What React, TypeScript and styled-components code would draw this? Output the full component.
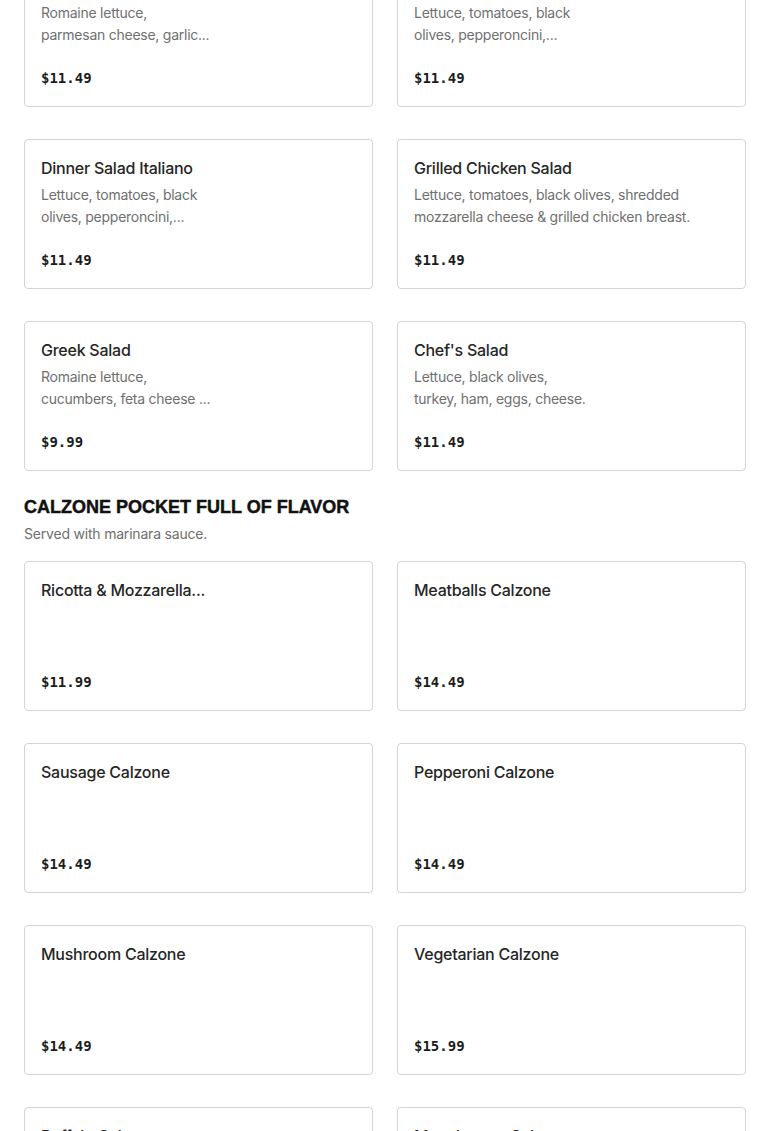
import styled, { createGlobalStyle } from "styled-components";

const GlobalStyle = createGlobalStyle`
  body {
    margin: 0;
    background: #ffffff;
    font-family: Inter, "Liberation Sans", sans-serif;
  }
`;

type Item = {
  name: string;
  lines: string[];
  price: string;
};

type Section = {
  title?: string;
  note?: string;
  items: Item[];
};

const sections: Section[] = [
  {
    items: [
      {
        name: "Caesar Salad",
        lines: ["Romaine lettuce,", "parmesan cheese, garlic..."],
        price: "$11.49",
      },
      {
        name: "Dinner Salad",
        lines: ["Lettuce, tomatoes, black", "olives, pepperoncini,..."],
        price: "$11.49",
      },
      {
        name: "Dinner Salad Italiano",
        lines: ["Lettuce, tomatoes, black", "olives, pepperoncini,..."],
        price: "$11.49",
      },
      {
        name: "Grilled Chicken Salad",
        lines: [
          "Lettuce, tomatoes, black olives, shredded",
          "mozzarella cheese & grilled chicken breast.",
        ],
        price: "$11.49",
      },
      {
        name: "Greek Salad",
        lines: ["Romaine lettuce,", "cucumbers, feta cheese ..."],
        price: "$9.99",
      },
      {
        name: "Chef's Salad",
        lines: ["Lettuce, black olives,", "turkey, ham, eggs, cheese."],
        price: "$11.49",
      },
    ],
  },
  {
    title: "CALZONE POCKET FULL OF FLAVOR",
    note: "Served with marinara sauce.",
    items: [
      { name: "Ricotta & Mozzarella...", lines: [], price: "$11.99" },
      { name: "Meatballs Calzone", lines: [], price: "$14.49" },
      { name: "Sausage Calzone", lines: [], price: "$14.49" },
      { name: "Pepperoni Calzone", lines: [], price: "$14.49" },
      { name: "Mushroom Calzone", lines: [], price: "$14.49" },
      { name: "Vegetarian Calzone", lines: [], price: "$15.99" },
      { name: "Buffalo Calzone", lines: [], price: "$15.99" },
      { name: "Meat Lovers Calzone", lines: [], price: "$15.99" },
    ],
  },
];

const Page = styled.main`
  margin-top: -43px;
  padding: 0 24px 40px;
  display: flex;
  flex-direction: column;
  gap: 24px;
`;

const Block = styled.section`
  display: flex;
  flex-direction: column;
`;

const Heading = styled.h2`
  margin: 0;
  font-family: "Liberation Sans", Arial, sans-serif;
  font-weight: 700;
  font-size: 18px;
  line-height: 24px;
  color: #111111;
  -webkit-text-stroke: 0.45px #111111;
`;

const Note = styled.p`
  margin: 4px 0 16px;
  font-size: 14px;
  line-height: 22px;
  letter-spacing: -0.2px;
  color: #6f6f6f;
`;

const Grid = styled.div`
  display: grid;
  grid-template-columns: 1fr 1fr;
  column-gap: 24px;
  row-gap: 32px;
`;

const Card = styled.div`
  min-height: 150px;
  box-sizing: border-box;
  border: 1px solid #d4d4d4;
  border-radius: 4px;
  padding: 16px 16px 17px;
  display: flex;
  flex-direction: column;
  background: #ffffff;
`;

const Name = styled.div`
  font-size: 16px;
  font-weight: 500;
  line-height: 24px;
  letter-spacing: -0.25px;
  color: #262626;
`;

const Desc = styled.div`
  margin-top: 4px;
  font-size: 14px;
  line-height: 22px;
  letter-spacing: -0.25px;
  color: #707070;
`;

const Price = styled.div`
  margin-top: auto;
  font-family: "DejaVu Sans Mono", "Liberation Mono", monospace;
  font-weight: 700;
  font-size: 14px;
  line-height: 22px;
  color: #1c1c1c;
`;

const MenuCard = ({ item }: { item: Item }) => (
  <Card>
    <Name>{item.name}</Name>
    {item.lines.length > 0 && (
      <Desc>
        {item.lines.map((l) => (
          <div key={l}>{l}</div>
        ))}
      </Desc>
    )}
    <Price>{item.price}</Price>
  </Card>
);

const App = () => {
  return (
    <>
      <GlobalStyle />
      <Page>
        {sections.map((s, i) => (
          <Block key={i}>
            {s.title && <Heading>{s.title}</Heading>}
            {s.note && <Note>{s.note}</Note>}
            <Grid>
              {s.items.map((item) => (
                <MenuCard key={item.name} item={item} />
              ))}
            </Grid>
          </Block>
        ))}
      </Page>
    </>
  );
};

export default App;
